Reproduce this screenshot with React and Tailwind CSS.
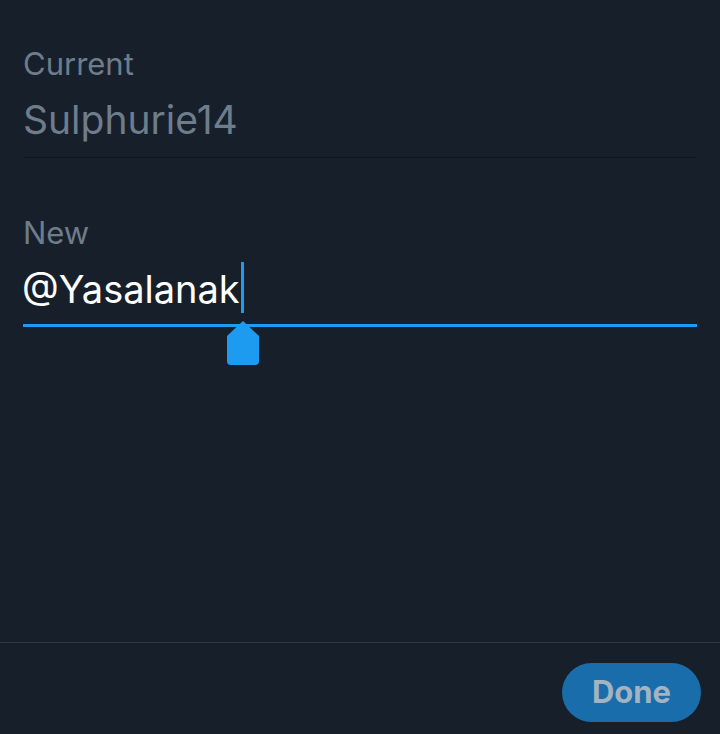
export default function App() {
  return (
    <div
      className="w-[720px] h-[734px] bg-[#17202a] flex flex-col overflow-hidden"
      style={{ fontFamily: "Inter, 'Liberation Sans', sans-serif" }}
    >
      <div className="flex-1 px-[23px] pt-[45px]">
        {/* CURRENT */}
        <div className="text-[31px] leading-[38px] text-[#6e7d8c]">Current</div>
        <div className="mt-[14px] text-[39px] leading-[46px] text-[#6e7d8c] pb-[14px] border-b border-[#10161d]">
          Sulphurie14
        </div>

        {/* NEW */}
        <div className="mt-[56px] text-[31px] leading-[38px] text-[#6e7d8c]">New</div>
        <div className="relative mt-[14px] h-[61px] border-b-[3px] border-[#1d9bf0]">
          <div className="flex items-start text-[38px] leading-[46px] text-white">
            <span className="-ml-[1px]">@Yasalanak</span>
            <span className="w-[3px] h-[51px] -mt-[4px] bg-[#1d9bf0] ml-[1px]" />
          </div>
          {/* cursor handle */}
          <svg
            className="absolute left-[203px] top-[55px]"
            width="34"
            height="45"
            viewBox="0 0 34 45"
          >
            <path
              d="M17 0 L33 15 L33 40 Q33 44 29 44 L5 44 Q1 44 1 40 L1 15 Z"
              fill="#1d9bf0"
            />
          </svg>
        </div>
      </div>

      {/* FOOTER */}
      <div className="h-[92px] border-t border-[#2e3944] flex items-start justify-end pt-[20px] pr-[19px]">
        <button className="w-[139px] h-[59px] rounded-full bg-[#1a6dab] text-[#a3b3c2] text-[31px] font-bold">
          Done
        </button>
      </div>
    </div>
  );
}
